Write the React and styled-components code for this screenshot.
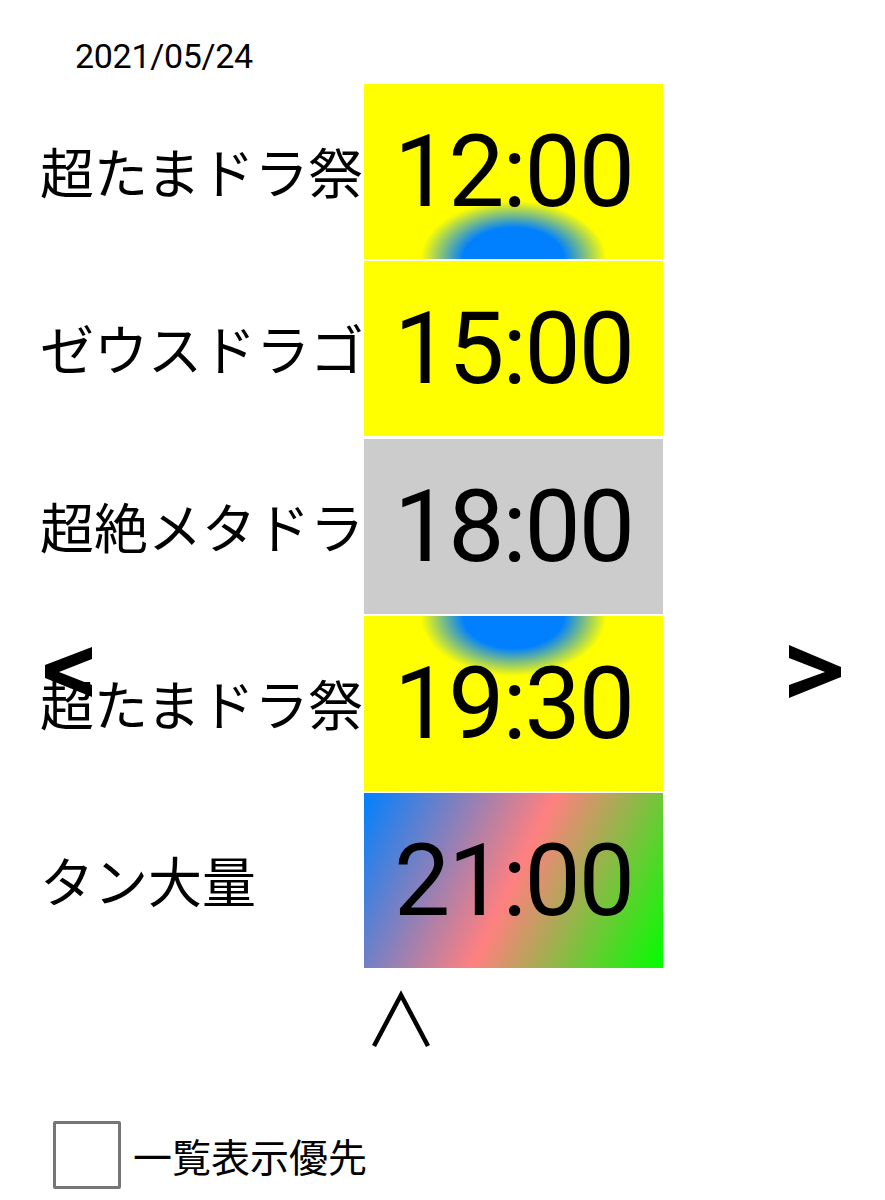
import React from "react";
import styled, { createGlobalStyle } from "styled-components";

const Global = createGlobalStyle`
  html, body { margin: 0; padding: 0; background: #ffffff; }
  body { font-family: Roboto, "Noto Sans CJK JP", sans-serif; color: #000; }
`;

const Page = styled.div`
  padding: 36px 0 0 40px;
  width: 845px;
  box-sizing: border-box;
`;

const DateText = styled.div`
  margin-left: 35px;
  font-family: Roboto, sans-serif;
  font-size: 34px;
  letter-spacing: -0.3px;
  line-height: 41px;
`;

const List = styled.div`
  position: relative;
  margin-top: 7px;
  display: flex;
  flex-direction: column;
  gap: 2.25px;
`;

const Row = styled.div`
  display: flex;
  align-items: center;
  height: 175px;
`;

const Label = styled.div`
  width: 324px;
  overflow: hidden;
  white-space: nowrap;
  font-family: "Noto Sans CJK JP", sans-serif;
  font-size: 54px;
  line-height: 1.2;
`;

const backgrounds = {
  sunBottom:
    "radial-gradient(ellipse 93px 58px at 50% 100%, #0080ff 54%, #ffff00 100%), #ffff00",
  plain: "#ffff00",
  gray: "#cccccc",
  sunTop:
    "radial-gradient(ellipse 93px 60px at 50% 0%, #0080ff 54%, #ffff00 100%), #ffff00",
  rainbow: "linear-gradient(116deg, #0080ff 0%, #ff8080 50%, #00ff00 100%)",
};

const TimeBox = styled.div`
  width: 299px;
  height: 100%;
  display: flex;
  align-items: center;
  justify-content: center;
  font-family: Roboto, sans-serif;
  font-size: 100px;
  letter-spacing: -2px;
  background: ${(p) => backgrounds[p.$bg]};
`;

const NavButton = styled.button`
  position: absolute;
  top: ${(p) => p.$top}px;
  left: ${(p) => p.$left}px;
  padding: 0;
  margin: 0;
  border: none;
  background: transparent;
  display: block;
  line-height: 0;
`;

const UpButton = styled.button`
  margin: 22px 0 0 330px;
  padding: 0;
  border: none;
  background: transparent;
  display: block;
  line-height: 0;
`;

const CheckRow = styled.label`
  display: flex;
  align-items: center;
  gap: 12px;
  margin: 71px 0 0 13px;
`;

const Box = styled.span`
  width: 68px;
  height: 68px;
  box-sizing: border-box;
  border: 3px solid #767676;
  border-radius: 2px;
  background: #fff;
  display: block;
`;

const CheckText = styled.span`
  font-family: "Noto Sans CJK JP", sans-serif;
  font-size: 39px;
  line-height: 1.2;
`;

const items = [
  { name: "超たまドラ祭", time: "12:00", bg: "sunBottom" },
  { name: "ゼウスドラゴン", time: "15:00", bg: "plain" },
  { name: "超絶メタドラゴン", time: "18:00", bg: "gray" },
  { name: "超たまドラ祭", time: "19:30", bg: "sunTop" },
  { name: "タン大量", time: "21:00", bg: "rainbow" },
];

export default function App() {
  return (
    <>
      <Global />
      <Page>
        <DateText>2021/05/24</DateText>
        <List>
          {items.map((it, i) => (
            <Row key={i}>
              <Label>{it.name}</Label>
              <TimeBox $bg={it.bg}>{it.time}</TimeBox>
            </Row>
          ))}
          <NavButton $left={5} $top={563} aria-label="prev">
            <svg width="47" height="50" viewBox="0 0 47 50">
              <polygon points="47,0 47,12 14,25 47,38 47,50 0,31 0,18" fill="#000" />
            </svg>
          </NavButton>
          <NavButton $left={749} $top={561} aria-label="next">
            <svg width="52" height="53" viewBox="0 0 52 53">
              <polygon points="0,0 52,22 52,32 0,53 0,40 36,27 0,13" fill="#000" />
            </svg>
          </NavButton>
        </List>
        <UpButton aria-label="up">
          <svg width="62" height="60" viewBox="0 0 62 60">
            <polyline
              points="4,56 31,5 58,56"
              fill="none"
              stroke="#000"
              strokeWidth="4.5"
              strokeLinecap="butt"
              strokeLinejoin="miter"
            />
          </svg>
        </UpButton>
        <CheckRow>
          <Box />
          <CheckText>一覧表示優先</CheckText>
        </CheckRow>
      </Page>
    </>
  );
}
